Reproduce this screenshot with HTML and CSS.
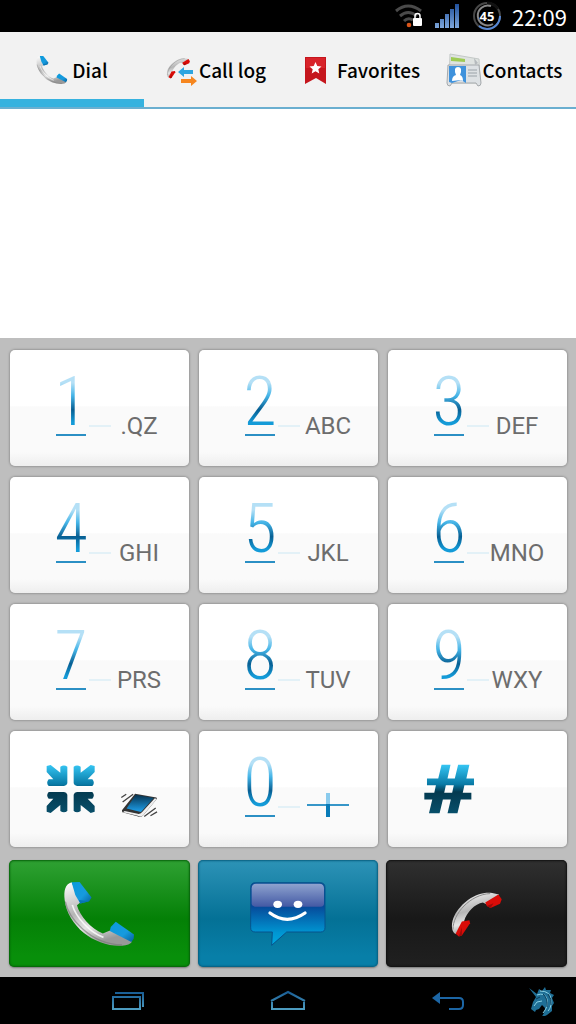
FILE: index.html
```html
<!DOCTYPE html>
<html lang="en">
<head>
<meta charset="utf-8">
<meta name="viewport" content="width=device-width, initial-scale=1">
<title>Dial</title>
<link rel="stylesheet" href="styles.css">
</head>
<body>
<svg class="defs" aria-hidden="true">
  <defs>
    <linearGradient id="silver" x1="0" y1="0" x2="0.3" y2="1"><stop offset="0" stop-color="#fff"/><stop offset=".5" stop-color="#b5b5b5"/><stop offset=".75" stop-color="#e6e6e6"/><stop offset="1" stop-color="#999"/></linearGradient>
    <linearGradient id="blue" x1="0" y1="0" x2="1" y2="1"><stop offset="0" stop-color="#0a9bdc"/><stop offset=".6" stop-color="#179ade"/><stop offset="1" stop-color="#05609c"/></linearGradient>
    <linearGradient id="steel" x1="0" y1="0" x2="0" y2="1"><stop offset="0" stop-color="#35c5f3"/><stop offset=".4" stop-color="#087aa6"/><stop offset=".56" stop-color="#043a50"/><stop offset="1" stop-color="#084f6a"/></linearGradient>
    <linearGradient id="screen" x1="0" y1="0" x2="0" y2="1"><stop offset="0" stop-color="#06324e"/><stop offset="1" stop-color="#1ea0ec"/></linearGradient>
    <linearGradient id="bars" x1="0" y1="0" x2="0" y2="1"><stop offset="0" stop-color="#20509c"/><stop offset="1" stop-color="#7da6da"/></linearGradient>
    <linearGradient id="line" x1="0" y1="0" x2="0" y2="1"><stop offset="0" stop-color="#1a5f96"/><stop offset="1" stop-color="#4d9cc0"/></linearGradient>
    <symbol id="handset" viewBox="190 85 220 205">
      <path fill="url(#silver)" d="M216 92C196 98 192 118 195 145C199 183 222 218 252 244C284 270 330 286 368 283Q391 281 398 271L364 242L330 238L310 246C274 232 240 192 232 161L243 152Z"/>
      <path fill="none" stroke="#777" stroke-opacity=".6" stroke-width="4" d="M197 150C205 193 265 278 368 281"/>
      <path fill="none" stroke="#fff" stroke-opacity=".8" stroke-width="5" d="M218 160C228 195 268 242 312 258"/>
      <path fill="url(#blue)" d="M216 92L240 91L276 138L269 149L242 156L227 130Z"/>
      <path fill="url(#blue)" d="M349 211L404 249L403 262L396 272L331 239L334 227Z"/>
      <path fill="#0876b5" d="M269 149L242 156L238 145Z"/>
    </symbol>
    <symbol id="handset-red" viewBox="768 116 164 144">
      <path fill="url(#silver)" d="M784 249C770 239 772 211 781 194C803 152 848 119 896 124L917 129L881 160L868 153C844 156 818 184 811 209L796 246Z"/>
      <path fill="none" stroke="#888" stroke-width="3" d="M777 235C776 188 830 128 890 126"/>
      <path fill="#d90c08" d="M785 248L804 211L827 207L829 216L804 253L795 256Z"/>
      <path fill="#d90c08" d="M875 153L915 129L925 143L920 157L891 170L880 164Z"/>
      <path fill="#9b0a08" d="M804 253L795 256L804 228ZM891 170L880 164L900 155Z"/>
    </symbol>
  </defs>
</svg>

<header class="status">
  <svg class="status-wifi" viewBox="0 0 28 26" aria-label="Wi-Fi"><g fill="none" stroke="#4a4a4a" stroke-width="3"><path d="M1 8Q13-2 26 8"/><path d="M5 13Q13 6 22 13"/><path d="M9 18Q13 14 18 17"/></g><circle cx="14" cy="22" r="2.300" fill="#d9551a"/><rect x="18" y="15" width="9" height="8" rx="1" fill="#fff"/><path d="M20 16v-3a2.500 2.500 0 0 1 5 0v3" fill="none" stroke="#fff" stroke-width="1.500"/></svg>
  <svg class="status-signal" viewBox="0 0 26 26" aria-label="Signal"><path fill="url(#bars)" d="M1 20h4v5H1zM6 16h4v9H6zM11 11h4v14h-4zM16 6h4v19h-4zM21 1h4v24h-4z"/></svg>
  <span class="battery">
    <svg viewBox="0 0 30 30" aria-hidden="true"><circle cx="15" cy="15" r="13" fill="none" stroke="#484848" stroke-width="2"/><path d="M15 2A13 13 0 0 1 26 8" fill="none" stroke="#111" stroke-width="3"/><path d="M28 15A13 13 0 0 1 15 28A13 13 0 0 1 7 25" fill="none" stroke="#5587d5" stroke-width="2"/><path d="M19 5A10 10 0 1 0 21 23" fill="none" stroke="#888" stroke-width="2"/></svg>
    <span class="battery-level">45</span>
  </span>
  <time class="clock">22:09</time>
</header>

<nav class="tabs">
  <a class="tab tab-active" href="#dial"><svg class="tab-icon tab-icon-dial" aria-hidden="true"><use href="#handset"/></svg>Dial</a>
  <a class="tab" href="#log"><svg class="tab-icon" viewBox="0 0 32 32" aria-hidden="true"><use href="#handset-red" x="0" y="1" width="25" height="26"/><path fill="#2ea5e0" d="M12 18l6-5v3h9v4h-9v3z"/><path fill="#f6861f" d="M31 27l-6-5v3h-10v4h10v3z"/></svg>Call log</a>
  <a class="tab tab-spaced" href="#favorites"><svg class="tab-icon" viewBox="0 0 32 32" aria-hidden="true"><path fill="#c5161d" d="M5 3h21v27l-10-6-11 6z"/><path fill="#d8232a" d="M6 4h19v10H6z"/><path fill="#fff" d="M15.500 8l1.800 4 4.200.4-3.200 2.800 1 4.200-3.800-2.200-3.800 2.200 1-4.200-3.200-2.800 4.200-.4z"/></svg>Favorites</a>
  <a class="tab" href="#contacts"><svg class="tab-icon tab-icon-wide" viewBox="0 0 36 34" aria-hidden="true"><path fill="#dfe3e1" stroke="#c4c9c7" d="M4 1l29 5 1 24H3z"/><path fill="#9ecb55" d="M5 4l14 2v3L5 8z"/><path fill="#dde1e4" stroke="#a5a9ac" d="M2 12h31l2 18q0 3-3 3l-2-3H6l-2 3q-3 0-3-3z"/><path fill="#3f92dc" d="M3 13h17v17l-5-3-9 3-3-1z"/><path fill="#fff" d="M6 28q0-5 4-6-3-8 2-8t2 8q3 1 3 6l-2-1z"/><path stroke="#9aa2a8" d="M22 17h9M22 20h9M22 23h9"/><path fill="#b5babd" d="M28 5l4 5-3 2z"/></svg>Contacts</a>
</nav>

<main class="dialer">
  <input class="number" type="tel" aria-label="Phone number">
  <section class="pad" aria-label="Keypad">
    <div class="keys">
      <button class="key"><span class="digit">1</span><span class="letters">.QZ</span></button>
      <button class="key"><span class="digit">2</span><span class="letters">ABC</span></button>
      <button class="key"><span class="digit">3</span><span class="letters">DEF</span></button>
      <button class="key"><span class="digit">4</span><span class="letters">GHI</span></button>
      <button class="key"><span class="digit">5</span><span class="letters">JKL</span></button>
      <button class="key"><span class="digit">6</span><span class="letters">MNO</span></button>
      <button class="key"><span class="digit">7</span><span class="letters">PRS</span></button>
      <button class="key"><span class="digit">8</span><span class="letters">TUV</span></button>
      <button class="key"><span class="digit">9</span><span class="letters">WXY</span></button>
      <button class="key key-symbol" aria-label="Star">
        <svg class="symbol" viewBox="138 117 150 148" aria-hidden="true"><path fill="url(#steel)" d="M140 122L152 119L181 142V124Q192 117 202 124V174Q200 182 192 182H146Q137 172 146 162H160L140 140ZM284 122L272 119L242 142V124Q231 117 221 124V174Q223 182 231 182H277Q286 172 277 162H263L284 140ZM140 259L152 263L181 239V257Q192 265 202 257V208Q200 200 192 200H146Q137 210 146 220H160L140 242ZM284 259L272 263L242 239V257Q231 265 221 257V208Q223 200 231 200H277Q286 210 277 220H263L284 242Z"/></svg>
        <svg class="vibrate" viewBox="356 202 116 80" aria-hidden="true"><path fill="#333" d="M402 208L467 219Q470 221 467 225L427 273Q420 281 409 276L363 264L362 258Z"/><path fill="#eee" d="M370 260L410 269Q418 270 423 264L463 221L467 225L427 273Q420 280 410 275L365 264Z"/><path fill="url(#screen)" d="M404 211L459 221L420 263L376 253Z"/><path stroke="#444" stroke-width="4" d="M360 219l15-10M364 233l32-24M430 277l35-26M449 275l20-12"/></svg>
      </button>
      <button class="key"><span class="digit">0</span><svg class="plus" viewBox="0 0 42 26" aria-label="plus"><path fill="#3696c8" d="M0 12h42v2H0z"/><path fill="#8acbed" d="M19 1h4v11h-4z"/><path fill="#087bb8" d="M19 12h4v13h-4z"/></svg></button>
      <button class="key key-symbol" aria-label="Pound">
        <svg class="hash" viewBox="682 120 154 150" aria-hidden="true"><path fill="url(#steel)" d="M735 122H762L753 163H775L785 122H819L810 163H833V184H804L799 206H825V227H793L783 268H753L763 227H739L729 268H697L707 227H683V206H713L718 184H691V163H725ZM748 184L743 206H767L772 184Z"/></svg>
      </button>
    </div>
    <div class="actions">
      <button class="action call" aria-label="Call"><svg class="call-icon" aria-hidden="true"><use href="#handset"/></svg></button>
      <button class="action message" aria-label="Message">
        <svg class="message-icon" viewBox="160 88 240 198" aria-hidden="true">
          <defs><linearGradient id="bubble" x1="0" y1="0" x2="0" y2="1"><stop offset="0" stop-color="#0b4e96"/><stop offset=".38" stop-color="#064a9a"/><stop offset=".8" stop-color="#0096d2"/><stop offset="1" stop-color="#00a9e0"/></linearGradient><linearGradient id="gloss" x1="0" y1="0" x2="0" y2="1"><stop offset="0" stop-color="#8fa3cf"/><stop offset="1" stop-color="#4359a4"/></linearGradient></defs>
          <path fill="url(#bubble)" stroke="#07538c" stroke-width="3" d="M182 93H376Q391 93 391 108V228Q391 241 378 241H276L231 281L233 241H182Q168 241 168 228V108Q168 93 182 93Z"/>
          <path fill="url(#gloss)" d="M184 96H374Q388 96 388 110V156Q388 164 378 165H180Q171 163 171 155V110Q171 96 184 96Z"/>
          <ellipse cx="249" cy="158" rx="13" ry="11" fill="#fff"/><ellipse cx="310" cy="158" rx="13" ry="11" fill="#fff"/>
          <path fill="none" stroke="#fff" stroke-width="10" stroke-linecap="round" d="M226 184Q277 222 331 184"/>
        </svg>
      </button>
      <button class="action end" aria-label="Hang up"><svg class="end-icon" aria-hidden="true"><use href="#handset-red"/></svg></button>
    </div>
  </section>
</main>

<footer class="system">
  <button class="system-button" aria-label="Recent apps"><svg viewBox="0 0 36 22" aria-hidden="true"><path fill="none" stroke="url(#line)" stroke-width="2" d="M3 7h27v12H3zM5 3h28v14"/></svg></button>
  <button class="system-button" aria-label="Home"><svg viewBox="0 0 36 22" aria-hidden="true"><path fill="none" stroke="url(#line)" stroke-width="2" d="M1 11L18 2l17 9M2 12v7h32v-7"/></svg></button>
  <button class="system-button" aria-label="Back"><svg viewBox="0 0 36 22" aria-hidden="true"><path fill="none" stroke="#1c66a5" stroke-width="2" d="M4 8h25q4 0 4 4v3q0 4-4 4H19"/><path fill="#1c66a5" d="M2 8l8-6v12z"/></svg></button>
  <svg class="unicorn" viewBox="0 0 28 30" aria-hidden="true"><path fill="#1f6f96" d="M1 2l8 6 2-5 3 2 3-4 1 3 5 0-1 3 4 2-2 3 2 5-2 3 0 5-5 4-6 3 3-5 1-5-3-3-3 4-3 1-1 2-4-3 2-7 3-5z"/><path fill="none" stroke="#8ad2e5" d="M9 9q8-3 10 4t-4 14M6 20l3-4 5-1M12 5q10 0 11 8t-3 12"/><path fill="none" stroke="#0a3b58" d="M8 13l4-2M15 8q5 4 4 13M20 8q4 5 3 11"/></svg>
</footer>
</body>
</html>
```
FILE: styles.css
```css
* { box-sizing: border-box; }

body {
  margin: 0;
  min-height: 100vh;
  display: flex;
  flex-direction: column;
  background: #000;
  font-family: Roboto, "Liberation Sans", sans-serif;
}

button {
  border: 0;
  padding: 0;
  background: none;
  font: inherit;
}

.defs { position: absolute; width: 0; height: 0; }

.status {
  display: flex;
  justify-content: flex-end;
  align-items: center;
  height: 32px;
  padding-right: 9px;
  color: #fff;
}
.status-wifi { width: 28px; height: 26px; margin-right: 11px; }
.status-signal { width: 26px; height: 26px; margin-right: 12px; }
.battery { display: grid; place-items: center; width: 30px; height: 30px; margin-right: 10px; }
.battery > * { grid-area: 1 / 1; }
.battery-level { font: bold 13px/16px "Open Sans", sans-serif; }
.clock { font: 22px/32px "Noto Sans CJK SC", sans-serif; }

.tabs {
  display: grid;
  grid-template-columns: repeat(4, 1fr);
  height: 77px;
  background: #f2f2f2;
  border-bottom: 2px solid #6bafd0;
}
.tab {
  display: flex;
  align-items: center;
  justify-content: center;
  gap: 1px;
  border-bottom: 8px solid transparent;
  padding-top: 8px;
  color: #000;
  font: 500 19px/28px "Noto Sans CJK SC", sans-serif;
  text-decoration: none;
}
.tab-active { border-color: #36b2df; }
.tab-spaced { gap: 5px; }
.tab-icon { width: 32px; height: 32px; flex: none; }
.tab-icon-dial { margin-right: 3px; }
.tab-icon-wide { width: 36px; height: 34px; }

.dialer { flex: 1; display: flex; flex-direction: column; }
.number {
  flex: 1;
  width: 100%;
  min-height: 80px;
  border: 0;
  padding: 0 24px;
  background: #fff;
  font: 48px/64px Roboto, sans-serif;
  text-align: right;
  outline: 0;
}

.pad { padding: 12px 9px 10px; background: #bebebe; }
.keys {
  display: grid;
  grid-template-columns: repeat(3, 1fr);
  gap: 11px 10px;
  padding: 0 0 0 1px;
}
.key {
  display: grid;
  grid-template-columns: 60fr 76fr;
  align-items: start;
  justify-items: center;
  height: 116px;
  padding: 20px 12px 0 31px;
  border-radius: 5px;
  background:
    linear-gradient(#e3f1f7, #e3f1f7) 50% 75px / 22px 2px no-repeat,
    linear-gradient(#fff 0 48%, #fafafa 49% 88%, #eee);
  box-shadow: 0 0 2px 1px #999;
}
.key-symbol { background: linear-gradient(#fff 0 48%, #fafafa 49% 88%, #eee); }
.digit {
  display: flex;
  justify-content: center;
  width: 30px;
  border-bottom: 2px solid #2b8fc4;
  background: linear-gradient(#b5e0f6 20%, #45b5e8 40%, #075f93 62%, #149bd8 82%);
  background-clip: text;
  -webkit-background-clip: text;
  color: transparent;
  font: 300 68px/64px "Roboto Condensed", "Liberation Sans Narrow", Roboto, sans-serif;
}
.letters { padding-top: 42px; color: #6d6d6d; font-size: 24px; line-height: 28px; }
.symbol { width: 50px; height: 50px; margin-top: 13px; }
.vibrate { width: 38px; height: 28px; margin-top: 40px; }
.plus { width: 42px; height: 26px; margin-top: 41px; }
.hash { width: 51px; height: 50px; margin-top: 13px; }

.actions {
  display: grid;
  grid-template-columns: repeat(3, 1fr);
  gap: 8px;
  margin-top: 13px;
}
.action {
  display: grid;
  place-items: center;
  height: 107px;
  border-radius: 5px;
}
.call { background: linear-gradient(#2fa133, #048006 55%, #088f0a 90%); box-shadow: inset 0 0 2px 1px #06600a, 0 1px 2px #777; }
.message { background: linear-gradient(#2d93b7, #047196 55%, #087fa8 90%); box-shadow: inset 0 0 2px 1px #075d7d, 0 1px 2px #777; }
.end { background: linear-gradient(#303030, #181818 55%, #202020); box-shadow: inset 0 0 2px 1px #111, 0 1px 2px #777; }
.call-icon { width: 73px; height: 68px; }
.message-icon { width: 80px; height: 66px; }
.end-icon { width: 54px; height: 48px; }

.system {
  display: grid;
  grid-template-columns: 48fr 160fr 160fr 160fr 48fr;
  align-items: center;
  height: 47px;
}
.system-button { display: grid; place-items: center; height: 47px; }
.system-button:first-child { grid-column: 2; }
.system-button svg { width: 36px; height: 22px; }
.unicorn { width: 28px; height: 30px; justify-self: start; }
```
